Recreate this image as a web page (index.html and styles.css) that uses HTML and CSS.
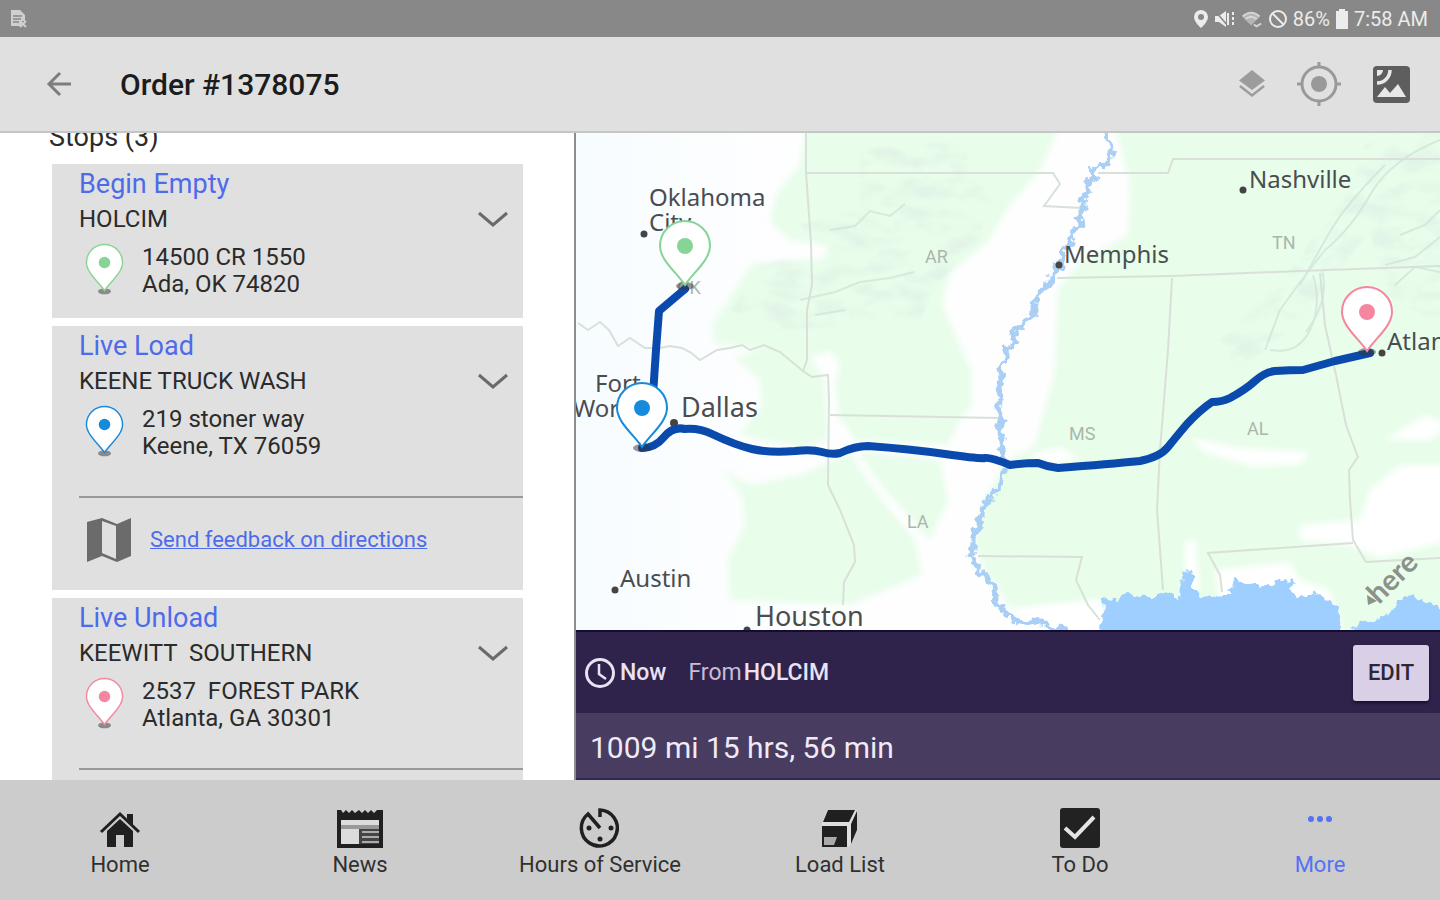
FILE: index.html
```html
<!DOCTYPE html>
<html lang="en">
<head>
<meta charset="utf-8">
<meta name="viewport" content="width=device-width, initial-scale=1">
<title>Order #1378075</title>
<link rel="stylesheet" href="styles.css">
</head>
<body>
<svg class="defs" aria-hidden="true">
  <symbol id="pin" viewBox="-27 -67 54 74">
    <ellipse class="pin-shadow" cx="0" cy="1" rx="9" ry="4"/>
    <path class="pin-body" d="M0 0C-8 -12 -25 -25 -25 -39A25 25 0 0 1 25 -39C25 -25 8 -12 0 0Z"/>
    <circle class="pin-dot" cx="0" cy="-39" r="8"/>
  </symbol>
  <symbol id="chevron" viewBox="0 0 32 18">
    <path d="M2 3L16 15L30 3" fill="none" stroke="currentColor" stroke-width="3"/>
  </symbol>
</svg>

<div class="status-bar">
  <svg class="status-note" viewBox="0 0 20 20" aria-hidden="true"><path fill="#cfcfcf" d="M3 1h9l5 5v6h-3v5H3z"/><path stroke="#888" stroke-width="1.4" d="M5 7h9M5 10h8M5 13h6"/><path stroke="#cfcfcf" stroke-width="2" d="M12 12l6 6M18 12l-6 6"/></svg>
  <div class="status-right">
    <svg width="16" height="20" viewBox="0 0 16 20" aria-hidden="true"><path fill="currentColor" fill-rule="evenodd" d="M8 1a7 7 0 0 0-7 7c0 5 7 11 7 11s7-6 7-11a7 7 0 0 0-7-7zm0 4a3 3 0 1 1 0 6 3 3 0 0 1 0-6z"/></svg>
    <svg width="22" height="20" viewBox="0 0 22 20" aria-hidden="true"><path fill="currentColor" d="M1 7h4l7-5v16l-7-5H1z"/><path stroke="#888" stroke-width="1.6" d="M2 3l12 14"/><path fill="none" stroke="currentColor" stroke-width="2" d="M14 4v12M19 3v3M19 8v3M19 13v3"/></svg>
    <svg width="22" height="20" viewBox="0 0 24 20" aria-hidden="true"><path fill="#b5b5b5" d="M1 7q10-9 20 0L11 17z"/><g fill="none" stroke="#d6d6d6" stroke-width="2"><path d="M2 7q9-8 18 0M5 10q6-5 12 0"/><path d="M14 16l3 2 5-3"/></g></svg>
    <svg width="20" height="20" viewBox="0 0 20 20" aria-hidden="true"><g fill="none" stroke="currentColor" stroke-width="2"><circle cx="10" cy="10" r="8"/><path d="M4.500 4.500l11 11"/></g></svg>
    <span class="battery-level">86%</span>
    <svg width="14" height="20" viewBox="0 0 14 20" aria-hidden="true"><path fill="currentColor" d="M4 0h6v2h3v18H1V2h3z"/></svg>
    <span>7:58 AM</span>
  </div>
</div>

<header class="app-bar">
  <button class="icon-button back" aria-label="Back"><svg width="26" height="26" viewBox="0 0 26 26"><path fill="none" stroke="#7d7d7d" stroke-width="3" d="M25 13H4M14 2L3 13l11 11"/></svg></button>
  <h1>Order #1378075</h1>
  <div class="app-actions">
    <button class="icon-button" aria-label="Map layers"><svg width="26" height="28" viewBox="0 0 26 28"><path fill="#9c9c9c" d="M13 0L26 10.500 13 20 0 10.500z"/><path fill="none" stroke="#9c9c9c" stroke-width="2.500" d="M1 16l12 9.500L25 16"/></svg></button>
    <button class="icon-button" aria-label="My location"><svg width="44" height="44" viewBox="0 0 44 44"><circle cx="22" cy="22" r="8" fill="#999"/><g fill="none" stroke="#999" stroke-width="3"><circle cx="22" cy="22" r="17"/><path d="M22 0v6M22 38v6M0 22h6M38 22h6"/></g></svg></button>
    <button class="icon-button" aria-label="Satellite view"><svg width="37" height="37" viewBox="0 0 37 37"><rect width="37" height="37" rx="4" fill="#5e5e5e"/><path fill="#e8e8e8" d="M4 31l8-10 5 6 8-9 8 13zM4 4h6a6 6 0 0 1-6 6z"/><path fill="none" stroke="#e8e8e8" stroke-width="3.500" d="M17 4A13 13 0 0 1 4 17"/></svg></button>
  </div>
</header>

<main class="content">
  <section class="stops" aria-label="Stops">
    <h2>Stops (3)</h2>
    <article class="stop">
      <h3>Begin Empty</h3>
      <div class="stop-name"><span>HOLCIM</span><button class="icon-button" aria-label="Expand HOLCIM"><svg width="32" height="18"><use href="#chevron"/></svg></button></div>
      <div class="stop-address"><svg class="stop-pin green"><use href="#pin"/></svg><address>14500 CR 1550<br>Ada, OK 74820</address></div>
    </article>
    <article class="stop">
      <h3>Live Load</h3>
      <div class="stop-name"><span>KEENE TRUCK WASH</span><button class="icon-button" aria-label="Expand KEENE TRUCK WASH"><svg width="32" height="18"><use href="#chevron"/></svg></button></div>
      <div class="stop-address"><svg class="stop-pin blue"><use href="#pin"/></svg><address>219 stoner way<br>Keene, TX 76059</address></div>
      <div class="feedback">
        <svg width="46" height="46" viewBox="0 0 46 46" aria-hidden="true"><path fill="#6b6b6b" fill-rule="evenodd" d="M1 5L16 1l15 6L45 1v38l-14 6-15-6L1 45zM16 4v32l14 6V9z"/></svg>
        <a href="#feedback">Send feedback on directions</a>
      </div>
    </article>
    <article class="stop">
      <h3>Live Unload</h3>
      <div class="stop-name"><span>KEEWITT  SOUTHERN</span><button class="icon-button" aria-label="Expand KEEWITT SOUTHERN"><svg width="32" height="18"><use href="#chevron"/></svg></button></div>
      <div class="stop-address"><svg class="stop-pin pink"><use href="#pin"/></svg><address>2537  FOREST PARK<br>Atlanta, GA 30301</address></div>
      <div class="feedback"></div>
    </article>
  </section>

  <section class="route" aria-label="Route">
    <svg class="map" viewBox="576 133 864 497" preserveAspectRatio="xMidYMid slice" role="img" aria-label="Route map from Ada to Atlanta">
      <defs>
        <filter id="soft" x="-5%" y="-5%" width="110%" height="110%"><feGaussianBlur stdDeviation="3"/></filter>
        <filter id="rough" x="-5%" y="-5%" width="110%" height="110%">
          <feTurbulence type="fractalNoise" baseFrequency="0.120" numOctaves="2" seed="4"/>
          <feDisplacementMap in="SourceGraphic" scale="12" xChannelSelector="R" yChannelSelector="G"/>
        </filter>
        <filter id="terrain" x="0" y="0" width="100%" height="100%">
          <feTurbulence type="fractalNoise" baseFrequency="0.030 0.060" numOctaves="4" seed="8" result="n"/>
          <feColorMatrix in="n" type="matrix" values="0 0 0 0 0.720  0 0 0 0 0.850  0 0 0 0 0.780  3 0 0 0 -1.300" result="c"/>
          <feComposite in="c" in2="SourceGraphic" operator="in"/>
          <feGaussianBlur stdDeviation="1"/>
        </filter>
        <linearGradient id="plains"><stop offset="0" stop-color="#f7fcfe"/><stop offset=".25" stop-color="#fefeff"/></linearGradient>
      </defs>
      <rect x="576" y="133" width="864" height="497" fill="url(#plains)"/>
      <g filter="url(#soft)" fill="#e8fdea">
        <path d="M806 125L1060 125 1040 170 1010 205 985 245 950 272 942 305 960 345 971 370 972 405 960 420 948 445 850 440 840 420 835 385 840 365 830 350 810 358 825 380 828 440 800 448 740 435 762 405 760 380 735 358 760 350 715 343 712 325 735 290 752 264 825 258 828 246 790 240 770 222 776 195 800 165z"/>
        <path d="M722 470L750 485 800 475 850 452 870 480 915 540 922 575 850 605 730 600 728 560 745 525 742 495z"/>
        <path d="M850 450L940 460 948 500 930 540 915 525 880 490z"/>
        <path d="M1114 125L1450 125 1450 640 1108 640 1100 602 1010 608 985 570 974 545 985 500 1006 462 1035 445 1055 370 1058 288 1080 262 1128 235 1130 180z"/>
      </g>
      <g filter="url(#soft)" fill="#fff">
        <path d="M1190 438L1240 448 1310 452 1300 465 1250 466 1205 452z"/>
        <path d="M1450 465L1400 465 1370 490 1360 520 1300 525 1300 540 1350 545 1380 558 1450 540z"/>
        <path d="M1385 440L1425 415 1450 425 1430 440z"/>
        <path d="M1215 570L1290 562 1300 580 1330 590 1345 640 1220 610z"/>
        <path d="M1185 540l10 0 5 50-15 0zM1030 455l30-8 20 12-40 8zM1020 610l80-10 10 30-80 0z"/>
      </g>
      <path filter="url(#soft)" fill="none" stroke="#fff" stroke-width="7" d="M842 425Q865 480 915 530"/>
      <g filter="url(#terrain)" opacity=".600">
        <path d="M860 150L960 140 990 200 975 250 935 285 920 320 780 330 730 310 760 265 830 250 800 225 860 210z"/>
        <path d="M1370 133L1440 133 1440 320 1390 300 1370 230 1300 320 1240 370 1220 340 1290 270 1350 190z"/>
      </g>
      <g class="ridges">
        <path d="M1440 140Q1390 160 1370 195T1325 250Q1305 275 1280 310L1265 350"/>
        <path d="M1385 165Q1345 205 1328 235T1300 285M1313 275Q1322 305 1310 330T1270 350M1322 270Q1330 300 1306 332"/>
        <path d="M1400 235l25-10 15-15M1385 265l30-8 25-20M1395 285l20-18 25 5"/>
        <path d="M800 300l35-8 25-10 30-4 24-6M830 230l25-4 15-15 20 5 15-12M815 315l30-5"/>
      </g>
      <g class="borders">
        <path d="M806 133L806 172 811 243 812 285 807 310 807 360 803 371 812 377 828 375 829 400 828 485 840 510 854 545 855 562 844 582 843 605"/>
        <path d="M807 173H1053L1060 184 1044 206 1082 208"/>
        <path d="M1098 173H1168L1173 159H1440"/>
        <path d="M1057 278L1172 276 1300 271 1440 266"/>
        <path d="M1172 278L1168 350 1160 450 1157 510 1163 590"/>
        <path d="M1320 273L1325 325 1336 375 1346 425 1358 457 1349 470 1350 500 1353 540 1366 562 1440 558"/>
        <path d="M830 415L999 418M978 556L1082 557 1076 580 1088 605 1100 620M1353 543L1208 553 1220 575 1222 592"/>
        <path d="M578 323L588 330 600 322 609 330 618 346 630 338 645 348 660 348 670 346 682 348 690 352 700 360 717 350 730 348 742 345 750 350 764 345 780 352 803 371"/>
      </g>
      <path class="river" filter="url(#rough)" d="M1104 133L1112 145 1110 158 1105 167 1100 162 1092 170 1095 178 1086 184 1089 192 1081 200 1084 209 1078 218 1082 225 1070 233 1072 242 1064 248 1061 268 1056 265 1052 274 1054 282 1043 287 1037 296 1033 308 1033 315 1024 321 1022 327 1012 333 1015 342 1006 348 1008 356 1000 367 1002 376 998 388 1002 397 997 408 1002 420 998 432 1003 443 1000 452 1005 464 1003 475 1001 488 993 490 994 497 987 498 982 515 978 520 981 527 974 535 974 545 969 556 975 560 978 573 987 573 989 581 994 586 995 600 1001 605 1001 612 1010 615 1018 623 1030 621 1042 622 1050 628 1070 629"/>
      <g fill="#9fcfff" filter="url(#rough)">
        <path d="M1101 645L1100 620 1104 610 1103 599 1116 600 1123 596 1135 594 1143 597 1155 597 1165 593 1178 598 1182 582 1183 573 1188 570 1193 574 1194 588 1202 596 1211 597 1220 594 1230 594 1234 580 1245 583 1253 586 1270 585 1284 580 1296 583 1290 590 1305 598 1317 592 1325 600 1336 603 1338 613 1344 645z"/>
        <path d="M1350 645V631L1363 622 1378 619 1392 610 1397 601 1414 597 1432 604 1450 615V645z"/>
      </g>
      <g class="states">
        <text x="925" y="263">AR</text><text x="1272" y="249">TN</text><text x="1069" y="440">MS</text><text x="1247" y="435">AL</text><text x="907" y="528">LA</text><text x="677" y="294">OK</text>
      </g>
      <g class="cities">
        <text x="649" y="206">Oklahoma</text><text x="649" y="231">City</text>
        <text x="1249" y="188">Nashville</text><text x="1064" y="263">Memphis</text><text x="1387" y="350">Atlanta</text>
        <text x="595" y="392">Fort</text><text x="573" y="417">Worth</text>
        <text x="620" y="587">Austin</text>
        <text class="large" x="681" y="417">Dallas</text><text class="large" x="755" y="626">Houston</text>
      </g>
      <g fill="#444"><circle cx="644" cy="234" r="3.500"/><circle cx="1243" cy="190" r="3.500"/><circle cx="1059" cy="265" r="3.500"/><circle cx="1382" cy="353" r="3.500"/><circle cx="674" cy="423" r="4"/><circle cx="615" cy="590" r="3.500"/><circle cx="747" cy="630" r="3.500"/></g>
      <path class="route-line" d="M685 289L659 311 656 350 653 395"/>
      <path class="route-line" d="M642 448Q655 448 664 437T685 429Q700 428 712 434 735 445 752 449T795 451Q812 449 822 452T840 453Q855 446 868 446 910 449 945 454T985 458 1010 465Q1025 463 1038 463 1048 467 1058 468 1110 464 1140 461 1160 457 1168 447T1187 424Q1200 410 1212 402 1222 402 1230 398 1245 390 1255 381T1275 371Q1290 370 1303 370L1335 361 1370 353"/>
      <svg class="green" x="658" y="218" width="54" height="74"><use href="#pin"/></svg>
      <svg class="blue" x="615" y="380" width="54" height="74"><use href="#pin"/></svg>
      <svg class="pink" x="1340" y="284" width="54" height="74"><use href="#pin"/></svg>
      <g fill="#8b918c"><path d="M1367 595l1 10 9-4z"/><text class="here" transform="translate(1379 605) rotate(-45)">here</text></g>
    </svg>
    <div class="trip">
      <svg width="32" height="32" viewBox="0 0 32 32" aria-hidden="true"><g fill="none" stroke="#e9e2f3" stroke-width="3"><circle cx="16" cy="16" r="13.500"/><path d="M15 7v10l7 5" stroke-width="2.500"/></g></svg>
      <span class="trip-now">Now</span>
      <span class="trip-from">From</span><strong>HOLCIM</strong>
      <button class="edit">EDIT</button>
    </div>
    <p class="summary">1009 mi 15 hrs, 56 min</p>
  </section>
</main>

<nav class="tabs" aria-label="Main">
  <a href="#home"><svg viewBox="0 0 44 44"><path fill="#202020" d="M9 25L22 13l13 12v16H26V29h-8v12H9z"/><path fill="none" stroke="#202020" stroke-width="3" d="M3 26L22 8l19 18"/><path fill="#202020" d="M29 8h6v11l-6-6z"/></svg>Home</a>
  <a href="#news"><svg viewBox="0 0 48 44"><path fill="#202020" d="M1 4h4l2 3 3-3 3 3 3-3 3 3 4-3 3 3 3-3 3 3 3-3 3 3 3-3h6v38H1z"/><path fill="#dcdcdc" d="M5 14h38v24H5z"/><path fill="#999" d="M5 19h38v4H5z"/><path fill="#444" d="M23 23h20v15H23z"/><path fill="#aaa" d="M26 25h17v2H26zM26 30h17v2H26zM26 35h17v2H26z"/></svg>News</a>
  <a href="#hours"><svg viewBox="0 0 44 44"><path fill="none" stroke="#202020" stroke-width="3.500" d="M22 11V4A18 18 0 1 1 10 8L22 22"/><g fill="#202020"><circle cx="11" cy="22" r="2.500"/><circle cx="33" cy="22" r="2.500"/><circle cx="22" cy="33" r="2.500"/></g></svg>Hours of Service</a>
  <a href="#loads"><svg viewBox="0 0 44 44"><path fill="#dedede" d="M9 4h30v22l-8 15H4V17z"/><path fill="#202020" d="M10 4h27l-6 12H5zM4 20h25v21H4zM33 18l6-13v19l-6 14z"/><path fill="#aaa" d="M6 31h13l-3 8H6z"/></svg>Load List</a>
  <a href="#todo"><svg viewBox="0 0 44 44"><rect x="2" y="2" width="40" height="40" rx="3" fill="#222"/><path fill="none" stroke="#e4e4e4" stroke-width="4" d="M7 22l10 9 19-20"/></svg>To Do</a>
  <a class="active" href="#more"><svg viewBox="0 0 44 44"><g fill="#5472f5"><circle cx="13" cy="13" r="3"/><circle cx="22" cy="13" r="3"/><circle cx="31" cy="13" r="3"/></g></svg>More</a>
</nav>
</body>
</html>
```
FILE: styles.css
```css
* { box-sizing: border-box; }

body {
  display: flex;
  flex-direction: column;
  height: 100vh;
  margin: 0;
  overflow: hidden;
  background: #fff;
  color: #2b2b2b;
  font-family: Roboto, "Liberation Sans", sans-serif;
  font-size: 24px;
}

h1, h2, h3, p { margin: 0; font-weight: 400; }
svg { display: block; flex: none; }
.defs { position: absolute; width: 0; height: 0; }

.icon-button {
  display: flex;
  padding: 0;
  border: 0;
  background: none;
  color: #6a6a6a;
}

.status-bar {
  display: flex;
  flex: none;
  align-items: center;
  justify-content: space-between;
  height: 37px;
  padding: 0 12px 0 8px;
  background: #888;
  color: #ececec;
  font-size: 20px;
}
.status-note { width: 20px; height: 20px; }
.status-right { display: flex; align-items: center; gap: 5px; }

.app-bar {
  display: flex;
  flex: none;
  align-items: center;
  height: 96px;
  padding: 0 30px 0 46px;
  border-bottom: 2px solid #c4c8c5;
  background: #e0e0e0;
}
.app-bar h1 {
  margin-left: 48px;
  color: #1c1c1c;
  font-size: 30px;
  font-weight: 500;
}
.app-actions { display: flex; align-items: center; gap: 32px; margin-left: auto; }

.content { display: flex; flex: 1; min-height: 0; }

.stops {
  flex: 0 0 40%;
  padding: 0 51px 0 52px;
  overflow: hidden;
  border-right: 2px solid #8d8d8d;
}
.stops h2 {
  margin: -12px 0 11px -3px;
  font-size: 27px;
  line-height: 32px;
}
.stop {
  margin-bottom: 8px;
  padding: 0 0 20px 27px;
  background: #e0e0e0;
}
.stop h3 { color: #4d6bea; font-size: 27px; line-height: 40px; }
.stop-name {
  display: flex;
  align-items: center;
  justify-content: space-between;
  height: 30px;
  padding-right: 14px;
  white-space: pre;
}
.stop-address { display: flex; gap: 18px; padding: 8px 0 0 6px; }
.stop-address address { padding-top: 2px; font-style: normal; line-height: 27px; white-space: pre; }
.stop-pin { width: 39px; height: 54px; }

.green { color: #86d597; }
.blue { color: #188adb; }
.pink { color: #f4879f; }
.pin-shadow { fill: #333; opacity: .5; }
.pin-body { fill: #fff; stroke: currentColor; stroke-width: 2px; }
.pin-dot { fill: currentColor; }

.feedback {
  display: flex;
  align-items: center;
  gap: 18px;
  height: 94px;
  margin: 36px 0 -20px;
  padding: 0 0 9px 7px;
  border-top: 2px solid #999;
}
.feedback a { color: #4d6bea; font-size: 22px; text-decoration-thickness: 1px; }

.route { display: flex; flex: 1; flex-direction: column; min-width: 0; }
.map { flex: 1; width: 100%; min-height: 0; }
.ridges { fill: none; stroke: #c9dfd3; stroke-width: 2px; opacity: .6; }
.borders { fill: none; stroke: #d8e1d9; stroke-width: 2px; }
.river { fill: none; stroke: #a9cff5; stroke-width: 5px; stroke-linejoin: round; }
.route-line { fill: none; stroke: #0b4aad; stroke-width: 8px; stroke-linejoin: round; stroke-linecap: round; }
.states { fill: #aab6ad; font-size: 18px; }
.cities { fill: #4a4d50; font-family: "Noto Sans", sans-serif; font-size: 24px; }
.cities .large { font-size: 27px; }
.here { font: 700 29px Lato, sans-serif; }

.trip {
  display: flex;
  align-items: center;
  height: 83px;
  padding: 0 11px 0 8px;
  border-top: 2px solid #150d31;
  background: #2f234b;
  color: #e9e2f3;
  font-size: 23px;
}
.trip-now { margin: 0 22px 0 4px; font-weight: 500; }
.trip-from { margin-right: 2px; color: #c7bcd9; }
.trip strong { font-weight: 500; }
.edit {
  width: 76px;
  height: 56px;
  margin-left: auto;
  padding: 0;
  border: 0;
  border-radius: 3px;
  background: #d9cfe6;
  box-shadow: 0 2px 3px #160e2e;
  color: #2b2735;
  font: 500 22px Roboto, sans-serif;
}
.summary {
  height: 67px;
  padding-left: 14px;
  border-bottom: 2px solid #33264f;
  background: #483c61;
  color: #efeaf5;
  font-size: 30px;
  line-height: 70px;
}

.tabs {
  display: grid;
  flex: none;
  grid-template-columns: repeat(6, 1fr);
  height: 120px;
  background: #ccc;
}
.tabs a {
  display: flex;
  flex-direction: column;
  align-items: center;
  padding-top: 26px;
  color: #303030;
  font-size: 22px;
  line-height: 30px;
  text-decoration: none;
}
.tabs svg { width: 48px; height: 44px; }
.tabs .active { color: #5472f5; }
```
